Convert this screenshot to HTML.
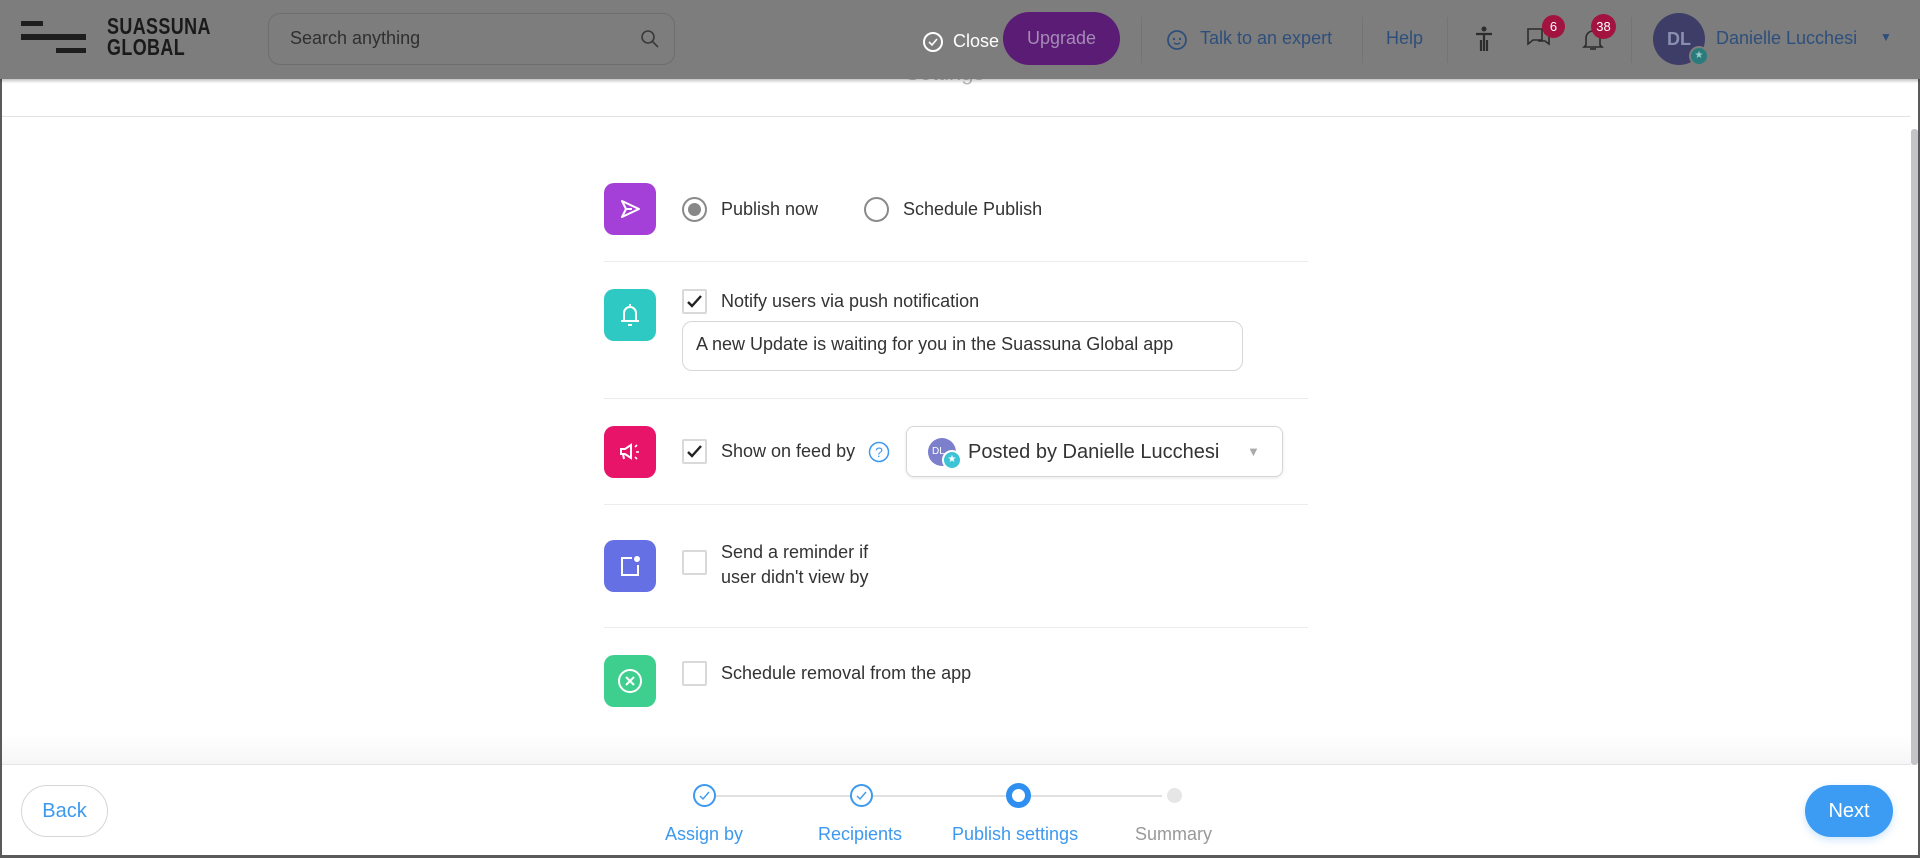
<!DOCTYPE html>
<html><head><meta charset="utf-8"><style>
*{margin:0;padding:0;box-sizing:border-box}
body{width:1920px;height:858px;overflow:hidden;background:#fff;font-family:"Liberation Sans",sans-serif;position:relative;color:#333}
.a{position:absolute}
.top{left:0;top:0;width:1920px;height:79px;background:#7d7d7d;box-shadow:0 2px 3px rgba(0,0,0,.25);z-index:5}
.ic{width:52px;height:52px;border-radius:10px;display:flex;align-items:center;justify-content:center}
.t{font-size:18px;color:#333;white-space:nowrap}
.div{left:604px;width:704px;height:1px;background:#ececec}
.cb{width:25px;height:25px;border:2px solid #d9d9d9;border-radius:2px;background:#fff}
.vsep{width:1px;height:46px;background:#747474;top:17px}
</style></head><body>
<div class="a" style="left:0;top:0;width:2px;height:858px;background:#5a5a5a"></div>
<div class="a" style="left:1918px;top:0;width:2px;height:858px;background:#5a5a5a"></div>
<div class="a" style="left:0;top:855px;width:1920px;height:3px;background:#5a5a5a"></div>
<div class="a" style="left:1911px;top:129px;width:7px;height:636px;background:#c4c4c8;border-radius:3px"></div>
<div class="a t" style="left:905px;top:60px;color:#bbb;font-size:22px">Settings</div>
<div class="a" style="left:2px;top:116px;width:1908px;height:1px;background:#e2e2e2"></div>

<div class="top a">
 <div class="a" style="left:21px;top:21px;width:22px;height:5px;background:#1e1e1e"></div>
 <div class="a" style="left:21px;top:34px;width:65px;height:6px;background:#1e1e1e"></div>
 <div class="a" style="left:56px;top:48px;width:30px;height:5px;background:#1e1e1e"></div>
 <div class="a" style="left:107px;top:16px;font-size:23px;font-weight:bold;line-height:21px;color:#1a1a1a;letter-spacing:.5px;transform:scaleX(.78);transform-origin:left">SUASSUNA<br>GLOBAL</div>
 <div class="a" style="left:268px;top:13px;width:407px;height:52px;border:1px solid #6e6e6e;border-radius:12px"></div>
 <div class="a" style="left:290px;top:28px;font-size:18px;color:#2f2f2f">Search anything</div>
 <svg class="a" style="left:640px;top:29px" width="20" height="20" viewBox="0 0 20 20"><circle cx="8" cy="8" r="6" fill="none" stroke="#3a3a3a" stroke-width="1.6"/><line x1="12.5" y1="12.5" x2="18" y2="18" stroke="#3a3a3a" stroke-width="1.6"/></svg>
 <svg class="a" style="left:922px;top:31px" width="22" height="22"><circle cx="11" cy="11" r="9" fill="none" stroke="#fff" stroke-width="2"/><path d="M7 11l3 3 5-6" fill="none" stroke="#fff" stroke-width="1.6"/></svg>
 <div class="a" style="left:953px;top:31px;font-size:18px;color:#fff">Close</div>
 <div class="a" style="left:1003px;top:12px;width:117px;height:53px;border-radius:27px;background:#5a1c75;color:#a58bb5;font-size:18px;display:flex;align-items:center;justify-content:center">Upgrade</div>
 <div class="a vsep" style="left:1141px"></div>
 <svg class="a" style="left:1166px;top:27px" width="24" height="24"><circle cx="11" cy="13" r="9" fill="none" stroke="#2e4f7c" stroke-width="1.8"/><circle cx="8" cy="12" r="1.2" fill="#2e4f7c"/><circle cx="14" cy="12" r="1.2" fill="#2e4f7c"/><path d="M8 16q3 2 6 0" fill="none" stroke="#2e4f7c" stroke-width="1.5"/></svg>
 <div class="a" style="left:1200px;top:28px;font-size:18px;color:#2e4f7c">Talk to an expert</div>
 <div class="a vsep" style="left:1362px"></div>
 <div class="a" style="left:1386px;top:28px;font-size:18px;color:#2e4f7c">Help</div>
 <div class="a vsep" style="left:1447px"></div>
 <svg class="a" style="left:1474px;top:26px" width="20" height="26"><circle cx="10" cy="3" r="2.5" fill="#2c2c2c"/><path d="M2 8h16M10 8v17M7 14v11M13 14v11" stroke="#2c2c2c" stroke-width="2.2" fill="none"/></svg>
 <svg class="a" style="left:1526px;top:27px" width="26" height="24"><path d="M2 2h14v11H7l-5 4z" fill="none" stroke="#2c2c2c" stroke-width="1.6"/><path d="M18 6h5v11l-4-3h-7" fill="none" stroke="#2c2c2c" stroke-width="1.6"/></svg>
 <div class="a" style="left:1542px;top:15px;width:23px;height:23px;border-radius:12px;background:#a3133f;color:#fff;font-size:13px;display:flex;align-items:center;justify-content:center">6</div>
 <svg class="a" style="left:1582px;top:27px" width="22" height="26"><path d="M11 2v2M4 18V11a7 7 0 0114 0v7l2 2H2z" fill="none" stroke="#2c2c2c" stroke-width="1.6"/><path d="M8 22h6" stroke="#2c2c2c" stroke-width="1.6"/></svg>
 <div class="a" style="left:1591px;top:14px;width:25px;height:25px;border-radius:13px;background:#a3133f;color:#fff;font-size:13px;display:flex;align-items:center;justify-content:center">38</div>
 <div class="a vsep" style="left:1631px"></div>
 <div class="a" style="left:1653px;top:13px;width:52px;height:52px;border-radius:26px;background:#3d3d68;color:#8a8fb0;font-size:18px;font-weight:bold;display:flex;align-items:center;justify-content:center">DL</div>
 <div class="a" style="left:1689px;top:46px;width:20px;height:20px;border-radius:10px;background:#2a7b7b;border:2px solid #7d7d7d;color:#9cc;font-size:10px;text-align:center;line-height:16px">★</div>
 <div class="a" style="left:1716px;top:28px;font-size:18px;color:#2e4f7c">Danielle Lucchesi</div>
 <div class="a" style="left:1880px;top:30px;font-size:12px;color:#2e4f7c">▼</div>
</div>

<div class="a ic" style="left:604px;top:183px;background:#a43fd8"><svg width="24" height="24"><path d="M4 4l17 8-17 8 4-8zM8 12h6" fill="none" stroke="#fff" stroke-width="2" stroke-linejoin="round"/></svg></div>
<div class="a" style="left:682px;top:197px;width:25px;height:25px;border-radius:13px;border:2px solid #8a8a8a;background:#fff"><div style="margin:4px;width:13px;height:13px;border-radius:7px;background:#888"></div></div>
<div class="a t" style="left:721px;top:199px">Publish now</div>
<div class="a" style="left:864px;top:197px;width:25px;height:25px;border-radius:13px;border:2px solid #8a8a8a"></div>
<div class="a t" style="left:903px;top:199px">Schedule Publish</div>
<div class="a div" style="top:261px"></div>

<div class="a ic" style="left:604px;top:289px;background:#2ec9c2"><svg width="24" height="28"><path d="M12 3v2M6 20V12a6 6 0 0112 0v8M3 20h18M10 24h4" fill="none" stroke="#fff" stroke-width="2"/></svg></div>
<div class="a cb" style="left:682px;top:289px"><svg width="21" height="21"><path d="M4 11l4 4 9-10" fill="none" stroke="#222" stroke-width="2.4"/></svg></div>
<div class="a t" style="left:721px;top:291px">Notify users via push notification</div>
<div class="a" style="left:682px;top:321px;width:561px;height:50px;border:1px solid #d6d6d6;border-radius:10px"></div>
<div class="a t" style="left:696px;top:334px">A new Update is waiting for you in the Suassuna Global app</div>
<div class="a div" style="top:398px"></div>

<div class="a ic" style="left:604px;top:426px;background:#e8146a"><svg width="26" height="24"><path d="M4 9h4l6-4v13l-6-4H4zM6 14l1 5" fill="none" stroke="#fff" stroke-width="2"/><path d="M18 7l2-2M19 12h3M18 17l2 2" stroke="#fff" stroke-width="1.6"/></svg></div>
<div class="a cb" style="left:682px;top:439px"><svg width="21" height="21"><path d="M4 11l4 4 9-10" fill="none" stroke="#222" stroke-width="2.4"/></svg></div>
<div class="a t" style="left:721px;top:441px">Show on feed by</div>
<svg class="a" style="left:868px;top:441px" width="22" height="22"><circle cx="11" cy="11" r="9.5" fill="none" stroke="#3d99ef" stroke-width="1.5"/><text x="11" y="16" text-anchor="middle" font-size="14" fill="#3d99ef" font-family="Liberation Sans">?</text></svg>
<div class="a" style="left:906px;top:426px;width:377px;height:51px;border:1px solid #d6d6d6;border-radius:8px;box-shadow:0 1px 3px rgba(0,0,0,.1)"></div>
<div class="a" style="left:928px;top:438px;width:28px;height:28px;border-radius:14px;background:#7b7fcc;color:#fff;font-size:10px;line-height:28px;padding-left:4px">DL</div>
<div class="a" style="left:942px;top:450px;width:20px;height:20px;border-radius:10px;background:#3cc3d6;border:2px solid #fff;color:#fff;font-size:10px;text-align:center;line-height:16px">★</div>
<div class="a" style="left:968px;top:441px;font-size:20px;color:#333">Posted by Danielle Lucchesi</div>
<div class="a" style="left:1247px;top:444px;font-size:13px;color:#aaa">▼</div>
<div class="a div" style="top:504px"></div>

<div class="a ic" style="left:604px;top:540px;background:#6470e4"><svg width="26" height="26"><path d="M15 5H5v17h16V12" fill="none" stroke="#fff" stroke-width="2"/><circle cx="20" cy="6" r="3" fill="#fff"/></svg></div>
<div class="a cb" style="left:682px;top:550px"></div>
<div class="a t" style="left:721px;top:540px;line-height:25px">Send a reminder if<br>user didn't view by</div>
<div class="a div" style="top:627px"></div>

<div class="a ic" style="left:604px;top:655px;background:#3ecf8e"><svg width="28" height="28"><circle cx="14" cy="14" r="11" fill="none" stroke="#fff" stroke-width="2"/><path d="M10 10l8 8M18 10l-8 8" stroke="#fff" stroke-width="2"/></svg></div>
<div class="a cb" style="left:682px;top:661px"></div>
<div class="a t" style="left:721px;top:663px">Schedule removal from the app</div>

<div class="a" style="left:2px;top:735px;width:1909px;height:29px;background:linear-gradient(#fff,#f6f6f7)"></div>
<div class="a" style="left:2px;top:764px;width:1909px;height:1px;background:#e4e4e4"></div>
<div class="a" style="left:21px;top:785px;width:87px;height:52px;border:1px solid #d6d6d6;border-radius:26px;color:#3d99ef;font-size:20px;display:flex;align-items:center;justify-content:center">Back</div>
<div class="a" style="left:1805px;top:785px;width:88px;height:52px;border-radius:26px;background:#3c9cf4;color:#fff;font-size:20px;display:flex;align-items:center;justify-content:center;box-shadow:0 3px 8px rgba(60,156,244,.25)">Next</div>
<div class="a" style="left:716px;top:795px;width:446px;height:2px;background:#e0e0e0"></div>
<div class="a" style="left:693px;top:784px;width:23px;height:23px;border-radius:12px;border:2px solid #3d99ef;background:#fff"><svg width="19" height="19"><path d="M5 10l3 3 6-7" fill="none" stroke="#3d99ef" stroke-width="1.4"/></svg></div>
<div class="a" style="left:850px;top:784px;width:23px;height:23px;border-radius:12px;border:2px solid #3d99ef;background:#fff"><svg width="19" height="19"><path d="M5 10l3 3 6-7" fill="none" stroke="#3d99ef" stroke-width="1.4"/></svg></div>
<div class="a" style="left:1006px;top:783px;width:25px;height:25px;border-radius:13px;border:6px solid #2f8ff0;background:#fff"></div>
<div class="a" style="left:1167px;top:788px;width:15px;height:15px;border-radius:8px;background:#e6e6e6"></div>
<div class="a" style="left:665px;top:824px;font-size:18px;color:#3d99ef">Assign by</div>
<div class="a" style="left:818px;top:824px;font-size:18px;color:#3d99ef">Recipients</div>
<div class="a" style="left:952px;top:824px;font-size:18px;color:#3d99ef">Publish settings</div>
<div class="a" style="left:1135px;top:824px;font-size:18px;color:#999">Summary</div>
</body></html>
